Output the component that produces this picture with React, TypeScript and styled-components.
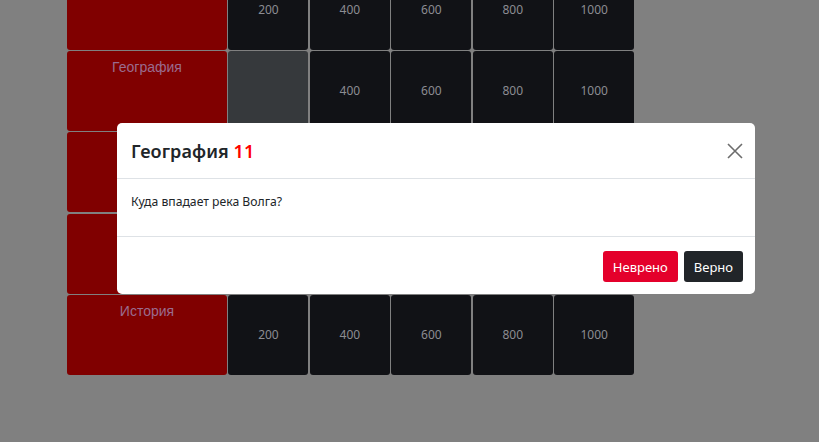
import { Fragment } from "react"
import styled, { createGlobalStyle } from "styled-components"

const GlobalStyle = createGlobalStyle`
  html, body {
    margin: 0;
    padding: 0;
    background: #808080;
    overflow: hidden;
  }
  body {
    font-family: "Noto Sans", "Liberation Sans", sans-serif;
  }
`

const Page = styled.div`
  position: relative;
  width: 819px;
  height: 442px;
  overflow: hidden;
`

const Board = styled.div`
  display: grid;
  grid-template-columns: 160px repeat(5, 80px);
  grid-auto-rows: 80px;
  gap: 1.35px 1.45px;
  margin-top: -30.4px;
  margin-left: 67px;
  width: max-content;
`

const Category = styled.div`
  background: #800000;
  border-radius: 3px;
  color: #9a6c8e;
  font-family: "Liberation Sans", Arial, sans-serif;
  font-size: 14px;
  text-align: center;
  padding-top: 8px;
`

const Cell = styled.div<{ $used?: boolean }>`
  background: ${(p) => (p.$used ? "#36393c" : "#111216")};
  border-radius: 3px;
  color: #8c8c92;
  font-size: 12px;
  display: flex;
  align-items: center;
  justify-content: center;
`

const Modal = styled.div`
  position: absolute;
  left: 117px;
  top: 123px;
  width: 638px;
  background: #fff;
  border-radius: 5px;
  color: #212529;
`

const Header = styled.div`
  display: flex;
  align-items: center;
  justify-content: space-between;
  height: 56px;
  padding: 0 10px 0 14px;
  border-bottom: 1px solid #dee2e6;
  box-sizing: border-box;
`

const Title = styled.h5`
  margin: 0;
  font-size: 18px;
  font-weight: 600;
  letter-spacing: 0.1px;
`

const Points = styled.span`
  color: #ff0000;
`

const Close = styled.button`
  border: 0;
  background: transparent;
  padding: 0;
  width: 20px;
  height: 20px;
  display: flex;
  align-items: center;
  justify-content: center;
  cursor: pointer;
`

const Body = styled.div`
  height: 58px;
  padding: 14px 14px 0;
  font-size: 12.2px;
  line-height: 18px;
  border-bottom: 1px solid #dee2e6;
  box-sizing: border-box;
`

const Footer = styled.div`
  display: flex;
  justify-content: flex-end;
  gap: 6px;
  padding: 14px 12px 12px;
`

const Button = styled.button<{ $danger?: boolean }>`
  height: 31px;
  padding: 0 10px;
  border: 0;
  border-radius: 3px;
  font-family: "Noto Sans", sans-serif;
  font-size: 13px;
  color: #fff;
  background: ${(p) => (p.$danger ? "#e4002b" : "#212529")};
  cursor: pointer;
`

const values = [200, 400, 600, 800, 1000]
// rows 1, 3 and 4 have their titles out of view / under the modal
const categories = ["", "География", "", "", "История"]

export default function App() {
  return (
    <Page>
      <GlobalStyle />
      <Board>
        {categories.map((cat, r) => (
          <Fragment key={r}>
            <Category>{cat}</Category>
            {values.map((v, i) =>
              r === 1 && i === 0 ? (
                <Cell key={v} $used />
              ) : (
                <Cell key={v}>{v}</Cell>
              )
            )}
          </Fragment>
        ))}
      </Board>
      <Modal>
        <Header>
          <Title>
            География <Points>11</Points>
          </Title>
          <Close aria-label="close">
            <svg width="16" height="16" viewBox="0 0 16 16">
              <path d="M1 1L15 15M15 1L1 15" stroke="#6c6c6c" strokeWidth="1.6" />
            </svg>
          </Close>
        </Header>
        <Body>Куда впадает река Волга?</Body>
        <Footer>
          <Button $danger>Неврено</Button>
          <Button>Верно</Button>
        </Footer>
      </Modal>
    </Page>
  )
}
